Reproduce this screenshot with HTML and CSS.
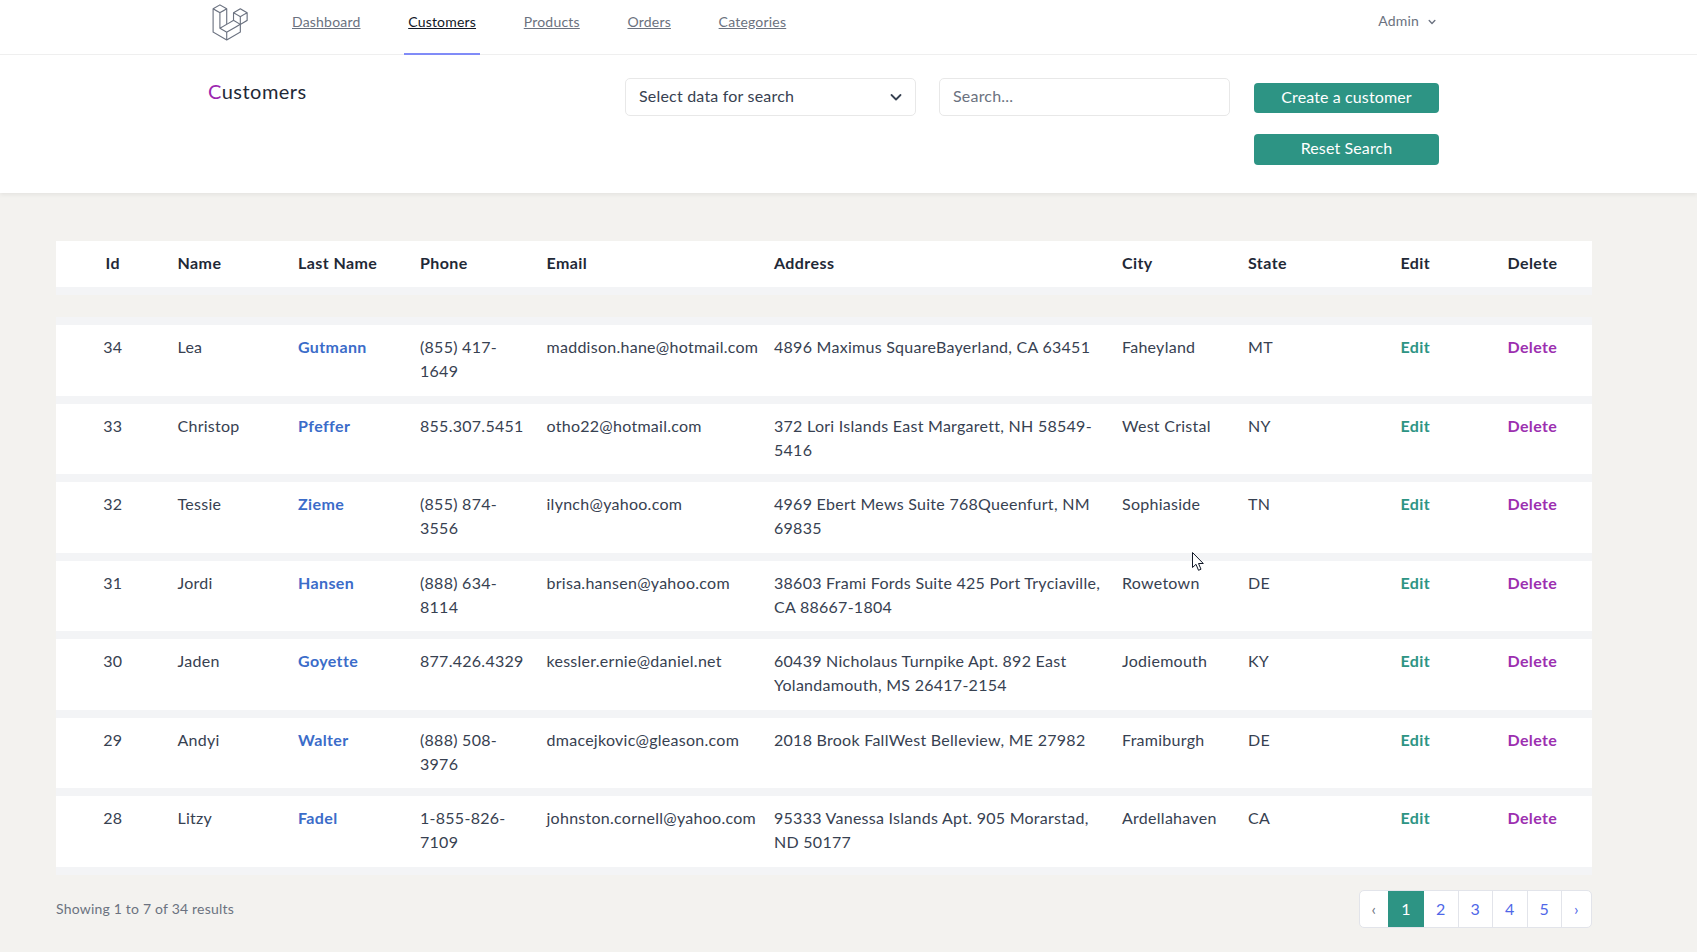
FILE: index.html
```html
<!DOCTYPE html>
<html lang="en">
<head>
  <meta charset="UTF-8">
  <meta name="viewport" content="width=device-width, initial-scale=1.0">
  <title>Customers</title>
  <link rel="stylesheet" href="styles.css">
</head>
<body>
  <nav class="topnav">
    <svg class="logo" viewBox="0 0 316 316" xmlns="http://www.w3.org/2000/svg"><path d="M305.8 81.125C305.77 80.995 305.69 80.885 305.65 80.755C305.56 80.525 305.49 80.285 305.37 80.075C305.29 79.935 305.17 79.815 305.07 79.685C304.94 79.515 304.83 79.325 304.68 79.175C304.55 79.045 304.39 78.955 304.25 78.845C304.09 78.715 303.95 78.575 303.77 78.475L251.32 48.275C249.97 47.495 248.31 47.495 246.96 48.275L194.51 78.475C194.33 78.575 194.19 78.725 194.03 78.845C193.89 78.955 193.73 79.045 193.6 79.175C193.45 79.325 193.34 79.515 193.21 79.685C193.11 79.815 192.99 79.935 192.91 80.075C192.79 80.285 192.71 80.525 192.63 80.755C192.58 80.875 192.51 80.995 192.48 81.125C192.38 81.495 192.33 81.875 192.33 82.265V139.625L148.62 164.795V52.575C148.62 52.185 148.57 51.805 148.47 51.435C148.44 51.305 148.36 51.195 148.32 51.065C148.23 50.835 148.16 50.595 148.04 50.385C147.96 50.245 147.84 50.125 147.74 49.995C147.61 49.825 147.5 49.635 147.35 49.485C147.22 49.355 147.06 49.265 146.92 49.155C146.76 49.025 146.62 48.885 146.44 48.785L93.99 18.585C92.64 17.805 90.98 17.805 89.63 18.585L37.18 48.785C37 48.885 36.86 49.035 36.7 49.155C36.56 49.265 36.4 49.355 36.27 49.485C36.12 49.635 36.01 49.825 35.88 49.995C35.78 50.125 35.66 50.245 35.58 50.385C35.46 50.595 35.38 50.835 35.3 51.065C35.25 51.185 35.18 51.305 35.15 51.435C35.05 51.805 35 52.185 35 52.575V232.235C35 233.795 35.84 235.245 37.19 236.025L142.1 296.425C142.33 296.555 142.58 296.635 142.83 296.725C142.95 296.765 143.06 296.835 143.18 296.865C143.55 296.965 143.93 297.015 144.31 297.015C144.69 297.015 145.07 296.965 145.44 296.865C145.56 296.835 145.67 296.775 145.79 296.725C146.04 296.635 146.29 296.565 146.52 296.425L251.43 236.025C252.78 235.245 253.62 233.805 253.62 232.235V174.885L303.88 145.945C305.24 145.165 306.07 143.725 306.07 142.155V82.265C305.95 81.875 305.9 81.495 305.8 81.125ZM144.2 227.205L100.57 202.515L146.39 176.135L196.66 147.195L240.33 172.335L208.29 190.625L144.2 227.205ZM244.75 114.995V164.795L226.39 154.225L201.03 139.625V89.825L219.39 100.395L244.75 114.995ZM249.12 57.105L292.81 82.265L249.12 107.425L205.43 82.265L249.12 57.105ZM114.49 184.425L96.13 194.995V85.305L121.49 70.705L139.85 60.135V169.815L114.49 184.425ZM91.76 27.425L135.45 52.585L91.76 77.745L48.07 52.585L91.76 27.425ZM43.67 60.135L62.03 70.705L87.39 85.305V202.545V202.555V202.565C87.39 202.735 87.44 202.895 87.46 203.055C87.49 203.265 87.49 203.485 87.55 203.695V203.705C87.6 203.875 87.69 204.035 87.76 204.195C87.84 204.375 87.89 204.575 87.99 204.745C87.99 204.745 87.99 204.755 88 204.755C88.09 204.905 88.22 205.035 88.33 205.175C88.45 205.335 88.55 205.495 88.69 205.635L88.7 205.645C88.82 205.765 88.98 205.855 89.12 205.965C89.28 206.085 89.42 206.225 89.59 206.325C89.6 206.325 89.6 206.325 89.61 206.335C89.62 206.335 89.62 206.345 89.63 206.345L139.87 234.775V285.065L43.67 229.705V60.135ZM244.75 229.705L148.58 285.075V234.775L219.8 194.115L244.75 179.875V229.705ZM297.2 139.625L253.49 164.795V114.995L278.85 100.395L297.21 89.825V139.625H297.2Z"/></svg>
    <div class="navlinks">
      <a class="navlink" href="#">Dashboard</a>
      <a class="navlink active" href="#">Customers</a>
      <a class="navlink" href="#">Products</a>
      <a class="navlink" href="#">Orders</a>
      <a class="navlink" href="#">Categories</a>
    </div>
    <div class="usermenu">
      Admin
      <svg class="usermenu-arrow" viewBox="0 0 20 20"><path d="M5.3 7.3a1 1 0 0 1 1.4 0L10 10.6l3.3-3.3a1 1 0 1 1 1.4 1.4l-4 4a1 1 0 0 1-1.4 0l-4-4a1 1 0 0 1 0-1.4z"/></svg>
    </div>
  </nav>

  <header class="pagehead">
    <h2 class="pagetitle"><span class="first-letter">C</span>ustomers</h2>
    <div class="field select-field">
      <span>Select data for search</span>
      <svg class="select-arrow" viewBox="0 0 16 16"><path d="M3.5 6l4.5 4.5L12.500 6" fill="none" stroke="currentColor" stroke-width="1.8" stroke-linecap="round" stroke-linejoin="round"/></svg>
    </div>
    <div class="field search-field">Search...</div>
    <div class="actions">
      <a class="btn btn-first" href="#">Create a customer</a>
      <a class="btn btn-second" href="#">Reset Search</a>
    </div>
  </header>

  <main class="content">
    <table class="customers">
      <colgroup>
        <col class="c-id"><col class="c-name"><col class="c-last"><col class="c-phone"><col class="c-email">
        <col class="c-address"><col class="c-city"><col class="c-state"><col class="c-edit"><col class="c-delete">
      </colgroup>
      <thead>
        <tr>
          <th class="center">Id</th><th>Name</th><th>Last Name</th><th>Phone</th><th>Email</th>
          <th>Address</th><th>City</th><th>State</th><th>Edit</th><th>Delete</th>
        </tr>
        <tr class="spacer"><td colspan="10"></td></tr>
      </thead>
      <tbody>
        <tr>
          <td class="center">34</td><td>Lea</td><td><a class="lastname" href="#">Gutmann</a></td><td>(855) 417-1649</td>
          <td>maddison.hane@hotmail.com</td><td>4896 Maximus SquareBayerland, CA 63451</td><td>Faheyland</td><td>MT</td>
          <td><a class="edit" href="#">Edit</a></td><td><a class="delete" href="#">Delete</a></td>
        </tr>
        <tr>
          <td class="center">33</td><td>Christop</td><td><a class="lastname" href="#">Pfeffer</a></td><td>855.307.5451</td>
          <td>otho22@hotmail.com</td><td>372 Lori Islands East Margarett, NH 58549-5416</td><td>West Cristal</td><td>NY</td>
          <td><a class="edit" href="#">Edit</a></td><td><a class="delete" href="#">Delete</a></td>
        </tr>
        <tr>
          <td class="center">32</td><td>Tessie</td><td><a class="lastname" href="#">Zieme</a></td><td>(855) 874-3556</td>
          <td>ilynch@yahoo.com</td><td>4969 Ebert Mews Suite 768Queenfurt, NM 69835</td><td>Sophiaside</td><td>TN</td>
          <td><a class="edit" href="#">Edit</a></td><td><a class="delete" href="#">Delete</a></td>
        </tr>
        <tr>
          <td class="center">31</td><td>Jordi</td><td><a class="lastname" href="#">Hansen</a></td><td>(888) 634-8114</td>
          <td>brisa.hansen@yahoo.com</td><td>38603 Frami Fords Suite 425 Port Tryciaville, CA 88667-1804</td><td>Rowetown</td><td>DE</td>
          <td><a class="edit" href="#">Edit</a></td><td><a class="delete" href="#">Delete</a></td>
        </tr>
        <tr>
          <td class="center">30</td><td>Jaden</td><td><a class="lastname" href="#">Goyette</a></td><td>877.426.4329</td>
          <td>kessler.ernie@daniel.net</td><td>60439 Nicholaus Turnpike Apt. 892 East Yolandamouth, MS 26417-2154</td><td>Jodiemouth</td><td>KY</td>
          <td><a class="edit" href="#">Edit</a></td><td><a class="delete" href="#">Delete</a></td>
        </tr>
        <tr>
          <td class="center">29</td><td>Andyi</td><td><a class="lastname" href="#">Walter</a></td><td>(888) 508-3976</td>
          <td>dmacejkovic@gleason.com</td><td>2018 Brook FallWest Belleview, ME 27982</td><td>Framiburgh</td><td>DE</td>
          <td><a class="edit" href="#">Edit</a></td><td><a class="delete" href="#">Delete</a></td>
        </tr>
        <tr>
          <td class="center">28</td><td>Litzy</td><td><a class="lastname" href="#">Fadel</a></td><td>1-855-826-7109</td>
          <td>johnston.cornell@yahoo.com</td><td>95333 Vanessa Islands Apt. 905 Morarstad, ND 50177</td><td>Ardellahaven</td><td>CA</td>
          <td><a class="edit" href="#">Edit</a></td><td><a class="delete" href="#">Delete</a></td>
        </tr>
      </tbody>
    </table>

    <div class="tablefoot">
      <p class="results">Showing 1 to 7 of 34 results</p>
      <div class="pager">
        <a class="page page-prev" href="#">‹</a>
        <a class="page current" href="#">1</a>
        <a class="page" href="#">2</a>
        <a class="page" href="#">3</a>
        <a class="page" href="#">4</a>
        <a class="page" href="#">5</a>
        <a class="page page-next" href="#">›</a>
      </div>
    </div>
  </main>

  <svg class="cursor" viewBox="0 0 12 19"><path d="M0.500 0.500V15.500L4 12.300L6.500 18.300L9 17.200L6.500 11.500H11.300Z" fill="#fff" stroke="#111827" stroke-width="1"/></svg>
</body>
</html>
```

FILE: styles.css
```css
html, body {
  height: 100%;
}
body {
  margin: 0;
  overflow: hidden;
  background-color: #f3f2ef;
  color: #374151;
  font-family: Lato, "Open Sans", sans-serif;
  font-size: 16px;
  letter-spacing: 0.27px;
}
a {
  color: inherit;
  text-decoration: none;
}

/* top nav */
.topnav {
  display: flex;
  height: 54px;
  padding: 0 258px 0 208px;
  background: white;
  border-bottom: 1px solid #f0f0f0;
}
.logo {
  width: 41px;
  height: 41px;
  margin-top: 2px;
  fill: #6b7280;
  flex-shrink: 0;
}
.navlinks {
  display: flex;
  gap: 39.7px;
  margin-left: 39px;
}
.navlink {
  height: 55px;
  padding: 14px 4px 0;
  box-sizing: border-box;
  border-bottom: 2px solid transparent;
  color: #6b7280;
  font-size: 14px;
  letter-spacing: 0.2px;
  line-height: 16px;
  text-decoration: underline;
}
.navlink.active {
  border-bottom-color: #818cf8;
  color: #111827;
}
.usermenu {
  display: flex;
  align-items: flex-start;
  gap: 6px;
  margin-left: auto;
  padding-top: 13px;
  color: #6b7280;
  font-size: 14px;
  letter-spacing: 0.2px;
  line-height: 16px;
}
.usermenu-arrow {
  width: 14px;
  height: 14px;
  margin-top: 2px;
  fill: #6b7280;
}

/* page header */
.pagehead {
  display: flex;
  align-items: flex-start;
  height: 138px;
  box-sizing: border-box;
  padding: 23px 0 0 208px;
  background: white;
  box-shadow: 0 2px 4px rgba(0, 0, 0, 0.06);
  position: relative;
}
.pagetitle {
  width: 417px;
  margin: -1.5px 0 0;
  color: #1f2937;
  font-size: 20px;
  font-weight: 400;
  letter-spacing: 0.48px;
  line-height: 28px;
}
.first-letter {
  color: #9c27b0;
}
.field {
  display: flex;
  align-items: center;
  justify-content: space-between;
  width: 291px;
  height: 38px;
  box-sizing: border-box;
  padding: 0 11px 3px 13px;
  background: white;
  border: 1px solid #e8e8e8;
  border-radius: 5px;
  letter-spacing: 0.2px;
}
.select-field {
  color: #374151;
}
.search-field {
  margin-left: 23px;
  color: #6b7280;
}
.select-arrow {
  width: 16px;
  height: 16px;
  margin-top: 3px;
  color: #374151;
}
.actions {
  display: flex;
  flex-direction: column;
  gap: 21px;
  width: 185px;
  margin: 5px 0 0 24px;
}
.btn {
  display: block;
  background-color: #2d9484;
  border-radius: 4px;
  color: white;
  letter-spacing: 0.12px;
  text-align: center;
}
.btn-first {
  height: 30px;
  line-height: 28px;
}
.btn-second {
  height: 31px;
  line-height: 28px;
}

/* table */
.content {
  padding: 48px 105px 0 56px;
}
.customers {
  width: 1536px;
  table-layout: fixed;
  border-collapse: separate;
  border-spacing: 0;
}
.c-id { width: 113.5px; }
.c-name { width: 120.5px; }
.c-last { width: 122px; }
.c-phone { width: 126.5px; }
.c-email { width: 227.5px; }
.c-address { width: 348px; }
.c-city { width: 126px; }
.c-state { width: 152.5px; }
.c-edit { width: 107px; }
.c-delete { width: 92.500px; }
.customers th {
  height: 43px;
  padding: 0 8px 3px;
  background: white;
  border-bottom: 8px solid #f3f4f6;
  color: #1f2937;
  font-weight: 700;
  letter-spacing: 0.42px;
  text-align: left;
  box-sizing: content-box;
}
.customers .center {
  text-align: center;
}
.customers .spacer td {
  height: 22px;
  padding: 0;
  background: #f3f2ef;
  border-bottom: 8px solid #f3f4f6;
}
.customers tbody td {
  padding: 10px 8px 12.5px;
  background: white;
  border-bottom: 8px solid #f3f4f6;
  line-height: 24px;
  vertical-align: top;
  height: 48px;
}
.lastname,
.edit,
.delete {
  font-weight: 700;
  letter-spacing: 0.38px;
}
.lastname {
  color: #3b6cc9;
}
.edit {
  color: #2d9484;
}
.delete {
  color: #9c2fb0;
}

/* pagination */
.tablefoot {
  display: flex;
  align-items: center;
  justify-content: space-between;
  margin-top: 15px;
}
.results {
  margin: 0;
  color: #6b7280;
  font-size: 14px;
  letter-spacing: 0.2px;
}
.pager {
  display: flex;
  height: 38px;
  box-sizing: border-box;
  background: white;
  border: 1px solid #e2e4ea;
  border-radius: 5px;
  overflow: hidden;
}
.page {
  display: flex;
  align-items: center;
  justify-content: center;
  width: 34.5px;
  box-sizing: border-box;
  border-right: 1px solid #e2e4ea;
  color: #4f67e8;
}
.page-prev {
  width: 28px;
  border-right: none;
  color: #6b7280;
}
.page-next {
  width: 29px;
  border-right: none;
}
.current {
  width: 36px;
  background-color: #2d9484;
  border-right: none;
  color: white;
}

/* mouse pointer in the shot */
.cursor {
  position: absolute;
  left: 1192px;
  top: 552px;
  width: 12px;
  height: 19px;
}
```
